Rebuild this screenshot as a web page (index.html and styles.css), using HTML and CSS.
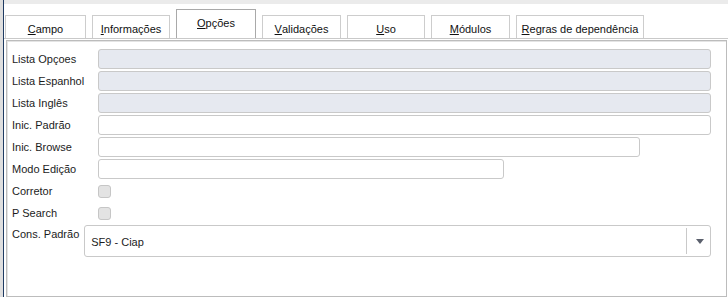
FILE: index.html
```html
<!DOCTYPE html>
<html lang="pt">
<head>
    <meta charset="UTF-8">
    <title>Opções</title>
    <link rel="stylesheet" href="styles.css">
</head>
<body>
    <div class="app">
        <div class="side"></div>
        <div class="main">
            <div class="topbar"></div>

            <!-- Tabs -->
            <div class="tabs">
                <div class="tab w-campo"><u>C</u>ampo</div>
                <div class="tab w-info"><u>I</u>nformações</div>
                <div class="tab active w-opc"><u>O</u>pções</div>
                <div class="tab w-val"><u>V</u>alidações</div>
                <div class="tab w-uso"><u>U</u>so</div>
                <div class="tab w-mod"><u>M</u>ódulos</div>
                <div class="tab w-reg"><u>R</u>egras de dependência</div>
            </div>

            <!-- Form panel -->
            <div class="panel">
                <div class="row">
                    <label>Lista Opçoes</label>
                    <div class="input disabled full"></div>
                </div>
                <div class="row">
                    <label>Lista Espanhol</label>
                    <div class="input disabled full"></div>
                </div>
                <div class="row">
                    <label>Lista Inglês</label>
                    <div class="input disabled full"></div>
                </div>
                <div class="row">
                    <label>Inic. Padrão</label>
                    <div class="input full"></div>
                </div>
                <div class="row">
                    <label>Inic. Browse</label>
                    <div class="input browse"></div>
                </div>
                <div class="row">
                    <label>Modo Edição</label>
                    <div class="input modo"></div>
                </div>
                <div class="row">
                    <label>Corretor</label>
                    <div class="check"></div>
                </div>
                <div class="row">
                    <label>P Search</label>
                    <div class="check"></div>
                </div>
                <div class="row select-row">
                    <label class="short">Cons. Padrão</label>
                    <div class="select">
                        <span class="value">SF9 - Ciap</span>
                        <span class="arrow"></span>
                    </div>
                </div>
            </div>
        </div>
    </div>
</body>
</html>
```

FILE: styles.css
```css
body {
    margin: 0;
    font-family: "Liberation Sans", Arial, sans-serif;
    font-size: 11px;
    color: #1c1c1c;
    background: #fff;
}

.app {
    display: flex;
    height: 297px;
    overflow: hidden;
}

.side {
    width: 3px;
    background: #dedede;
    border-right: 1px solid #1f3b63;
    flex: none;
}

.main {
    flex: 1;
    display: flex;
    flex-direction: column;
}

.topbar {
    height: 4px;
    background: #ebebeb;
}

/* tabs */
.tabs {
    display: flex;
    align-items: flex-end;
    gap: 6px;
    height: 34px;
    padding-left: 1px;
    border-bottom: 1px solid #c9c9c9;
}

.tab {
    box-sizing: border-box;
    height: 23px;
    border: 1px solid #cdcdcd;
    border-bottom: none;
    background: #fff;
    display: flex;
    align-items: center;
    justify-content: center;
    padding-top: 4px;
    color: #111;
}

.tab.active {
    height: 29px;
    border-color: #a9a9a9;
    padding-top: 0;
    padding-bottom: 2px;
}

.w-campo { width: 81px; }
.w-info { width: 78px; }
.w-opc { width: 80px; }
.w-val { width: 79px; }
.w-uso { width: 78px; }
.w-mod { width: 79px; }
.w-reg { width: 128px; }

/* panel */
.panel {
    flex: 1;
    margin: 1px 1px 0 2px;
    border: 1px solid #bcbcbc;
    box-shadow: inset 1px 1px 0 #e4e4e4;
    padding: 8px 15px 0 5px;
    display: flex;
    flex-direction: column;
    gap: 2px;
}

.row {
    display: flex;
    align-items: center;
    height: 20px;
}

.row label {
    width: 86px;
    flex: none;
}

.input {
    box-sizing: border-box;
    height: 20px;
    border: 1px solid #c9c9c9;
    border-radius: 3px;
    background: #fff;
}

.input.disabled {
    background: #e6e9f0;
}

.full { flex: 1; }
.browse { width: 542px; }
.modo { width: 406px; }

.check {
    box-sizing: border-box;
    width: 13px;
    height: 13px;
    border: 1px solid #c6c6c6;
    border-radius: 3px;
    background: #e3e3e3;
}

.select-row {
    height: 32px;
    align-items: flex-start;
}

.row label.short {
    width: auto;
    padding-top: 3px;
    margin-right: 5px;
}

.select {
    flex: 1;
    box-sizing: border-box;
    height: 32px;
    border: 1px solid #c9c9c9;
    border-radius: 3px;
    display: flex;
    align-items: center;
    padding-left: 6px;
}

.select .value {
    flex: 1;
    padding-top: 1px;
}

.select .arrow {
    width: 23px;
    height: 26px;
    border-left: 1px solid #c9c9c9;
    position: relative;
}

.select .arrow::after {
    content: "";
    position: absolute;
    left: 9px;
    top: 11px;
    border-left: 4px solid transparent;
    border-right: 4px solid transparent;
    border-top: 5px solid #5b606d;
}
```
